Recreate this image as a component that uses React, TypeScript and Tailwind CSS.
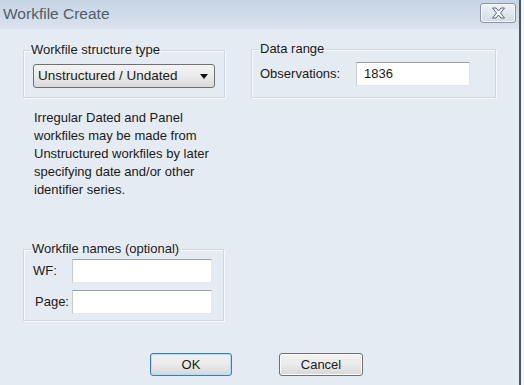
const font = { fontFamily: '"Liberation Sans", Arial, sans-serif' };

function CloseGlyph() {
  return (
    <svg width="15" height="12" viewBox="0 0 15 12">
      <path d="M1.5 1 L5 1 L7.5 4 L10 1 L13.5 1 L9.5 6 L13.5 11 L10 11 L7.5 8 L5 11 L1.5 11 L5.5 6 Z" fill="#f4f6f9" stroke="#5d6875" strokeWidth="1" strokeLinejoin="round" />
    </svg>
  );
}

function Field({ value = '', className = '' }: { value?: string; className?: string }) {
  return (
    <div className={`h-[24px] bg-white border border-t-[#9ba0a8] border-l-[#c9ccd2] border-r-[#e4e7eb] border-b-[#e4e7eb] flex items-center pl-[7px] text-[13px] text-[#1a1a1a] ${className}`}>
      {value}
    </div>
  );
}

function Group({ title, className = '', legendClass = '', children }: { title: string; className?: string; legendClass?: string; children: React.ReactNode }) {
  return (
    <fieldset className={`border border-[#cfd8e2] shadow-[inset_1px_1px_0_#f7f9fc,1px_1px_0_#f7f9fc] ${className}`}>
      <legend className={`px-[1px] text-[13px] leading-[16px] text-[#1a1a1a] ${legendClass}`}>{title}</legend>
      {children}
    </fieldset>
  );
}

export default function App() {
  return (
    <div className="w-[524px] h-[385px] overflow-hidden bg-[#f3f5f8] relative" style={font}>
      <div className="w-[521px] h-full bg-[#e5ebf3] border-r-2 border-[#4f5660] flex flex-col">
        {/* Title bar */}
        <div className="h-[29px] flex items-start justify-between bg-gradient-to-b from-[#c6d4e4] to-[#dae3ee]">
          <span className="pl-[3px] pt-[2px] text-[15.5px] text-[#515d6a]">Workfile Create</span>
          <div className="mt-[3px] mr-[3px] w-[36px] h-[20px] rounded-[3px] border border-[#8995a4] bg-gradient-to-b from-[#eef2f7] to-[#d3dce7] shadow-[inset_0_0_0_1px_#f6f8fb] flex items-center justify-center">
            <CloseGlyph />
          </div>
        </div>

        {/* Body */}
        <div className="flex">
          <div className="ml-[23px] w-[201px] flex flex-col">
            <Group title="Workfile structure type" className="mt-[13px] px-[9px] pb-[9px]" legendClass="-ml-[3px]">
              <div className="mt-[6px] w-[182px] h-[24px] rounded-[3px] border border-[#707070] bg-gradient-to-b from-[#f3f3f3] via-[#ebebeb] to-[#d9d9d9] flex items-center justify-between pl-[4px] pr-[6px] text-[13.5px] text-[#1a1a1a]">
                <span>Unstructured / Undated</span>
                <svg width="8" height="5" viewBox="0 0 8 5"><path d="M0 0 H8 L4 5 Z" fill="#111" /></svg>
              </div>
            </Group>
            <p className="mt-[11px] pl-[11px] text-[13px] leading-[18px] text-[#1a1a1a]">
              Irregular Dated and Panel<br />
              workfiles may be made from<br />
              Unstructured workfiles by later<br />
              specifying date and/or other<br />
              identifier series.
            </p>
            <Group title="Workfile names (optional)" className="mt-[42px] pl-[9px] pr-[10px] pb-[6px]" legendClass="-ml-[2px]">
              <div className="mt-[2px] flex items-center">
                <span className="w-[39px] text-[13px] text-[#1a1a1a]">WF:</span>
                <Field className="w-[140px]" />
              </div>
              <div className="mt-[7px] flex items-center">
                <span className="w-[39px] pl-[2px] text-[13px] text-[#1a1a1a]">Page:</span>
                <Field className="w-[140px]" />
              </div>
            </Group>
          </div>

          <div className="ml-[27px] w-[245px]">
            <Group title="Data range" className="mt-[12px] pl-[8px] pr-[24px] pb-[11px]" legendClass="-ml-[1px]">
              <div className="mt-[5px] flex items-center">
                <span className="w-[96px] text-[13px] text-[#1a1a1a]">Observations:</span>
                <Field value="1836" className="w-[114px]" />
              </div>
            </Group>
          </div>
        </div>

        {/* Buttons */}
        <div className="mt-[32px] flex gap-[47px] pl-[150px]">
          <button className="w-[82px] h-[23px] rounded-[3px] border border-[#3c7fb1] bg-gradient-to-b from-[#f2f2f2] via-[#ebebeb] to-[#d6d6d6] shadow-[inset_0_0_0_1px_#aee0f5] text-[13px] text-[#1a1a1a]">
            OK
          </button>
          <button className="w-[84px] h-[23px] rounded-[3px] border border-[#707070] bg-gradient-to-b from-[#f2f2f2] via-[#ebebeb] to-[#d6d6d6] shadow-[inset_0_0_0_1px_#fbfbfb] text-[13px] text-[#1a1a1a]">
            Cancel
          </button>
        </div>
      </div>
    </div>
  );
}
